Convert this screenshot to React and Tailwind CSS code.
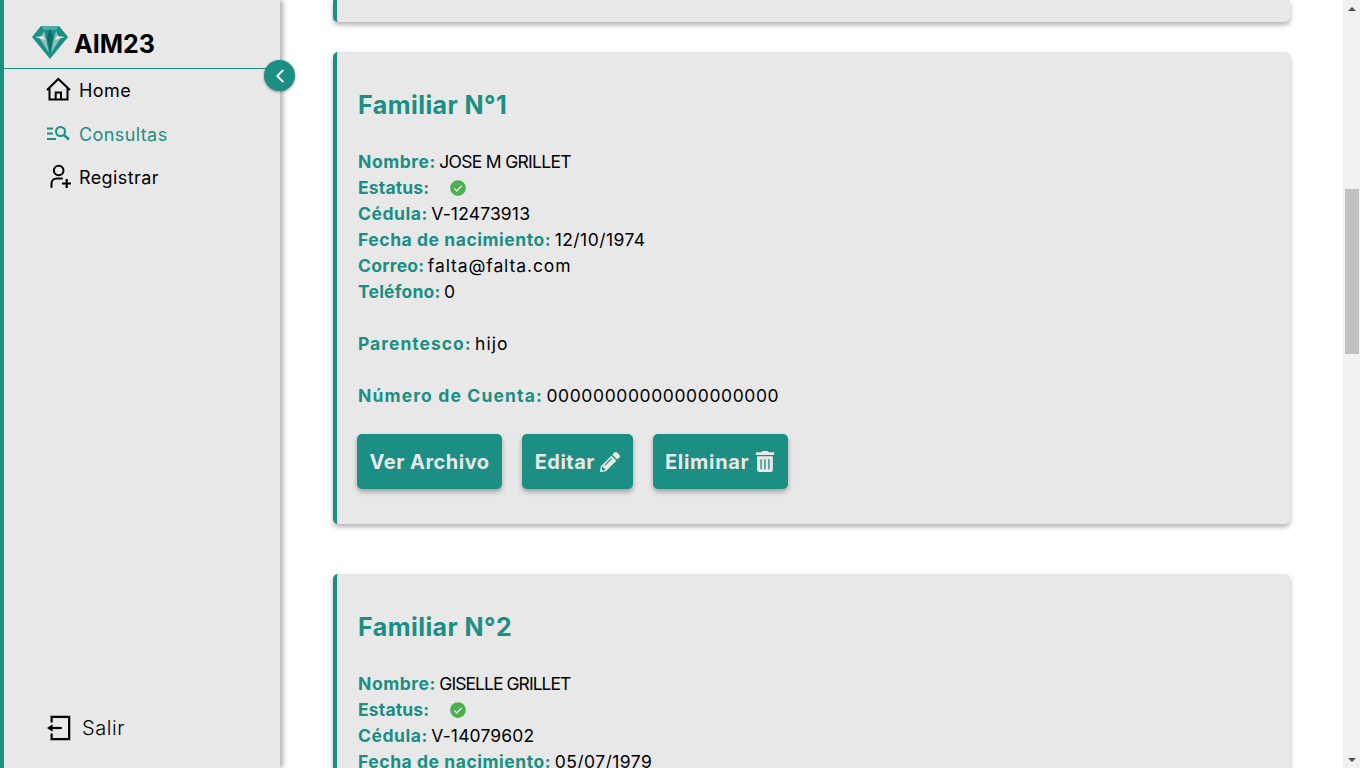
import React from 'react';
import { FaPencilAlt, FaTrashAlt } from 'react-icons/fa';
import { ChevronLeft } from 'lucide-react';

const font = { fontFamily: 'Inter, sans-serif' };

const familiares = [
  { n: 1, nombre: 'JOSE M GRILLET', nombreTrack: 'tracking-[-0.7px]', cedula: 'V-12473913', fecha: '12/10/1974', correo: 'falta@falta.com', telefono: '0', parentesco: 'hijo', cuenta: '00000000000000000000' },
  { n: 2, nombre: 'GISELLE GRILLET', nombreTrack: 'tracking-[-0.95px]', cedula: 'V-14079602', fecha: '05/07/1979', correo: 'falta@falta.com', telefono: '0', parentesco: 'hija', cuenta: '00000000000000000000' },
];

const Logo = () => (
  <svg viewBox="0 0 36 34" className="w-[36px] h-[34px]">
    <path d="M9 1h18l9 11-18 22L0 12z" fill="#1b8f83" />
    <path d="M9 1h18l-3 4H12z" fill="#4fb0a6" />
    <path d="M3 12l8-1 2 4zM33 12l-8-1-2 4z" fill="#e8e8e8" />
    <path d="M18 3l3 9-3 16-3-16z" fill="#0f6f66" />
    <path d="M12 6l2 7 3 15-9-14zM24 6l-2 7-3 15 9-14z" fill="#e8e8e8" opacity="0.55" />
  </svg>
);

const Row = ({ label, labelTrack, value, valueTrack }) => (
  <p className="h-[26px] leading-[26px] text-[17.5px] text-black">
    <span className={`font-bold text-[#1b8f83] ${labelTrack}`}>{label}</span>{' '}
    <span className={`-ml-[1.5px] ${valueTrack}`}>{value}</span>
  </p>
);

const Boton = ({ children }) => (
  <button className="h-[55px] px-[12.5px] flex items-center gap-[5px] rounded-[5px] bg-[#1b8f83] text-[#e8e8e8] text-[20px] tracking-[0.5px] font-bold shadow-[0_3px_5px_rgba(0,0,0,0.3)]">
    {children}
  </button>
);

const Card = ({ f }) => (
  <section className="shrink-0 h-[472px] mb-[50px] rounded-[5px] border-l-4 border-[#1b8f83] bg-[#e8e8e8] pl-[20px] pt-[36px] shadow-[0_3px_5px_rgba(0,0,0,0.3)]">
    <h2 className="h-[35px] pl-px leading-[35px] text-[25px] tracking-[0.45px] font-bold text-[#1b8f83]">Familiar N°{f.n}</h2>
    <div className="mt-[26px] pl-px">
      <Row label="Nombre:" labelTrack="tracking-[0.55px]" value={f.nombre} valueTrack={f.nombreTrack} />
      <p className="h-[26px] flex items-center text-[17.5px] font-bold text-[#1b8f83] tracking-[0.15px]">
        <span className="w-[91px]">Estatus:</span>
        <svg viewBox="0 0 24 24" className="w-[18px] h-[18px]">
          <circle cx="12" cy="12" r="10.5" fill="#4caf50" />
          <path d="M7 12.5l3.4 3.4L17 9" fill="none" stroke="#e8e8e8" strokeWidth="1.8" />
        </svg>
      </p>
      <Row label="Cédula:" labelTrack="tracking-[0.55px]" value={f.cedula} valueTrack="tracking-[0.15px]" />
      <Row label="Fecha de nacimiento:" labelTrack="tracking-[0.55px]" value={f.fecha} valueTrack="tracking-[0.45px]" />
      <Row label="Correo:" labelTrack="tracking-[0.25px]" value={f.correo} valueTrack="tracking-[0.9px]" />
      <Row label="Teléfono:" labelTrack="tracking-[0.2px]" value={f.telefono} />
      <div className="mt-[26px]">
        <Row label="Parentesco:" labelTrack="tracking-[1px]" value={f.parentesco} valueTrack="tracking-[1px]" />
      </div>
      <div className="mt-[26px]">
        <Row label="Número de Cuenta:" labelTrack="tracking-[1.15px]" value={f.cuenta} valueTrack="tracking-[0.6px]" />
      </div>
    </div>
    <div className="mt-[25px] flex gap-[20px]">
      <Boton>Ver Archivo</Boton>
      <Boton>Editar <FaPencilAlt className="w-[20px] h-[20px]" /></Boton>
      <Boton><span className="tracking-[0.7px]">Eliminar</span> <FaTrashAlt className="ml-[1px] w-[20px] h-[21px]" /></Boton>
    </div>
  </section>
);

const NavItem = ({ icon, label, active }) => (
  <a className={`h-[43.5px] flex items-center text-[18px] tracking-[0.4px] ${active ? 'text-[#1b8f83]' : 'text-black'}`}>
    <span className="w-[75px] pl-[43px] flex items-center">{icon}</span>
    {label}
  </a>
);

export default function App() {
  return (
    <div style={font} className="h-screen overflow-hidden flex bg-white">
      {/* Sidebar */}
      <aside className="relative shrink-0 w-[280px] h-full border-l-4 border-[#1b8f83] bg-[#e8e8e8] flex flex-col shadow-[3px_0_5px_rgba(0,0,0,0.3)] z-10">
        <div className="h-[69px] shrink-0 border-b border-[#1b8f83] pl-[28px] pt-[25px] flex items-start gap-[6px]">
          <Logo />
          <span className="text-[25px] leading-[38px] font-bold text-black">AIM23</span>
        </div>
        <button className="absolute left-[260px] top-[60px] w-[31px] h-[31px] rounded-full bg-[#1b8f83] text-white flex items-center justify-center shadow-[0_1px_3px_rgba(0,0,0,0.4)]">
          <ChevronLeft size={22} strokeWidth={2} />
        </button>
        <nav className="flex flex-col">
          <NavItem
            label="Home"
            icon={
              <svg viewBox="46 75 25 24" className="w-[25px] h-[24px] -ml-px -translate-y-[2px]" fill="none" stroke="black" strokeWidth="2">
                <path d="M47 88L58.3 77 70 88M49.5 85v12.5h18V85M55.7 97.5V90.5h5.3v7" />
              </svg>
            }
          />
          <NavItem
            label="Consultas"
            active
            icon={
              <svg viewBox="47 125 23 15" className="w-[23px] h-[15px] -translate-y-[1px]" fill="none" stroke="#1b8f83" strokeWidth="2">
                <path d="M47 127.5h6M47 132.5h6M47 138h9" />
                <circle cx="60.5" cy="130.5" r="4.5" />
                <path d="M64 134l5 4.5" strokeWidth="2.4" />
              </svg>
            }
          />
          <NavItem
            label="Registrar"
            icon={
              <svg viewBox="47 162 24 25" className="w-[24px] h-[25px] -translate-y-[2px]" fill="none" stroke="black" strokeWidth="2">
                <circle cx="58.7" cy="169.5" r="4.8" />
                <path d="M51.5 186v-3.5a5 5 0 0 1 5-5h5.5" strokeLinecap="round" />
                <path d="M62 182.5h9.5M66.7 178v9" strokeWidth="2.2" />
              </svg>
            }
          />
        </nav>
        <a className="mt-auto mb-[20px] h-[40px] flex items-center text-[20px] font-light tracking-[0.6px] text-black">
          <span className="w-[78px] pl-[43px] flex items-center">
            <svg viewBox="0 0 26 28" className="w-[24px] h-[26px]" fill="none" stroke="black" strokeWidth="2.4">
              <path d="M5 8V2h19v24H5v-6" />
              <path d="M4 14h12" />
              <path d="M0 14l6-4v8z" fill="black" stroke="none" />
            </svg>
          </span>
          Salir
        </a>
      </aside>

      {/* Contenido */}
      <main className="flex-1 min-w-0 pl-[53px] pr-[53px] flex flex-col overflow-hidden">
        <div className="shrink-0 h-[22px] mb-[30px] rounded-b-[5px] border-l-4 border-[#1b8f83] bg-[#e8e8e8] shadow-[0_3px_5px_rgba(0,0,0,0.3)]" />
        {familiares.map((f) => <Card key={f.n} f={f} />)}
      </main>

      {/* Scrollbar */}
      <div className="shrink-0 w-[17px] h-full bg-[#f1f1f1] flex flex-col items-center">
        <div className="h-[17px] shrink-0 flex items-center justify-center">
          <div className="w-0 h-0 border-x-[4px] border-x-transparent border-b-[4px] border-b-[#505050]" />
        </div>
        <div className="mt-[172px] h-[165px] w-[14px] bg-[#c1c1c1]" />
        <div className="mt-auto h-[17px] shrink-0 flex items-center justify-center">
          <div className="w-0 h-0 border-x-[4px] border-x-transparent border-t-[4px] border-t-[#505050]" />
        </div>
      </div>
    </div>
  );
}
